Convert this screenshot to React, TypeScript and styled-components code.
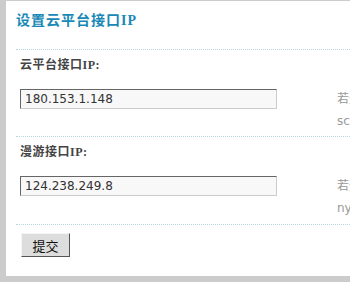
import styled, { createGlobalStyle } from 'styled-components';

const GlobalStyle = createGlobalStyle`
  html, body {
    margin: 0;
    padding: 0;
    background: #cccccc;
    overflow: hidden;
  }
  body {
    font-family: "DejaVu Sans", Verdana, "Noto Sans CJK SC", sans-serif;
    font-size: 12px;
    color: #333;
  }
`;

const Page = styled.div`
  padding: 1px 0 0 6px;
  width: 700px;
`;

const Panel = styled.div`
  background: #fff;
  height: 275px;
  padding: 0 0 0 10px;
  box-sizing: border-box;
`;

const Title = styled.h2`
  margin: 0;
  padding: 10px 0 0 0;
  height: 48px;
  box-sizing: border-box;
  font-family: "Liberation Serif", "Noto Sans CJK SC", serif;
  font-size: 14px;
  line-height: 20px;
  letter-spacing: 1px;
  font-weight: bold;
  color: #1888b6;
`;

const FormList = styled.div`
  display: flex;
  flex-direction: column;
`;

const Row = styled.div<{ $h: number }>`
  border-top: 1px dotted #b8d6e2;
  height: ${({ $h }) => $h}px;
  box-sizing: border-box;
  padding: 7px 0 0 4px;
  display: grid;
  grid-template-columns: 317px 1fr;
  grid-template-rows: 16px auto;
  row-gap: 16px;
  align-content: start;
`;

const ButtonRow = styled.div`
  border-top: 1px dotted #b8d6e2;
  padding: 8px 0 0 5px;
`;

const Label = styled.label`
  grid-column: 1 / 3;
  font-family: "Liberation Serif", "Noto Sans CJK SC", serif;
  font-weight: bold;
  font-size: 12px;
  line-height: 16px;
  letter-spacing: 0.5px;
  color: #444;
`;

const Input = styled.input`
  width: 257px;
  height: 20px;
  box-sizing: border-box;
  margin: 0;
  padding: 0 4px;
  border-style: solid;
  border-width: 1px;
  border-color: #666 #ccc #ccc #666;
  background: #f8f8f8;
  font-family: "DejaVu Sans", Verdana, sans-serif;
  font-size: 12px;
  color: #333;
  outline: none;
`;

const Hint = styled.div`
  margin-top: -1px;
  color: #999;
  font-size: 12px;
  line-height: 22px;
  white-space: nowrap;
`;

const SubmitButton = styled.button`
  width: 49px;
  height: 24px;
  box-sizing: border-box;
  margin: 0;
  padding: 0;
  border-style: solid;
  border-width: 1px;
  border-color: #f4f4f4 #555 #555 #f4f4f4;
  background: #dddddd;
  font-family: "Noto Sans CJK SC", sans-serif;
  font-size: 13px;
  color: #111;
  cursor: pointer;
`;

export default function App() {
  return (
    <>
      <GlobalStyle />
      <Page>
        <Panel>
          <Title>设置云平台接口IP</Title>
          <FormList>
            <Row $h={87}>
              <Label htmlFor="cloud">云平台接口IP:</Label>
              <Input id="cloud" defaultValue="180.153.1.148" />
              <Hint>
                若无特殊情况请勿修改
                <br />
                scloud.example.com
              </Hint>
            </Row>
            <Row $h={88}>
              <Label htmlFor="roam">漫游接口IP:</Label>
              <Input id="roam" defaultValue="124.238.249.8" />
              <Hint>
                若无特殊情况请勿修改
                <br />
                nyroam.example.com
              </Hint>
            </Row>
            <ButtonRow>
              <SubmitButton type="submit">提交</SubmitButton>
            </ButtonRow>
          </FormList>
        </Panel>
      </Page>
    </>
  );
}
